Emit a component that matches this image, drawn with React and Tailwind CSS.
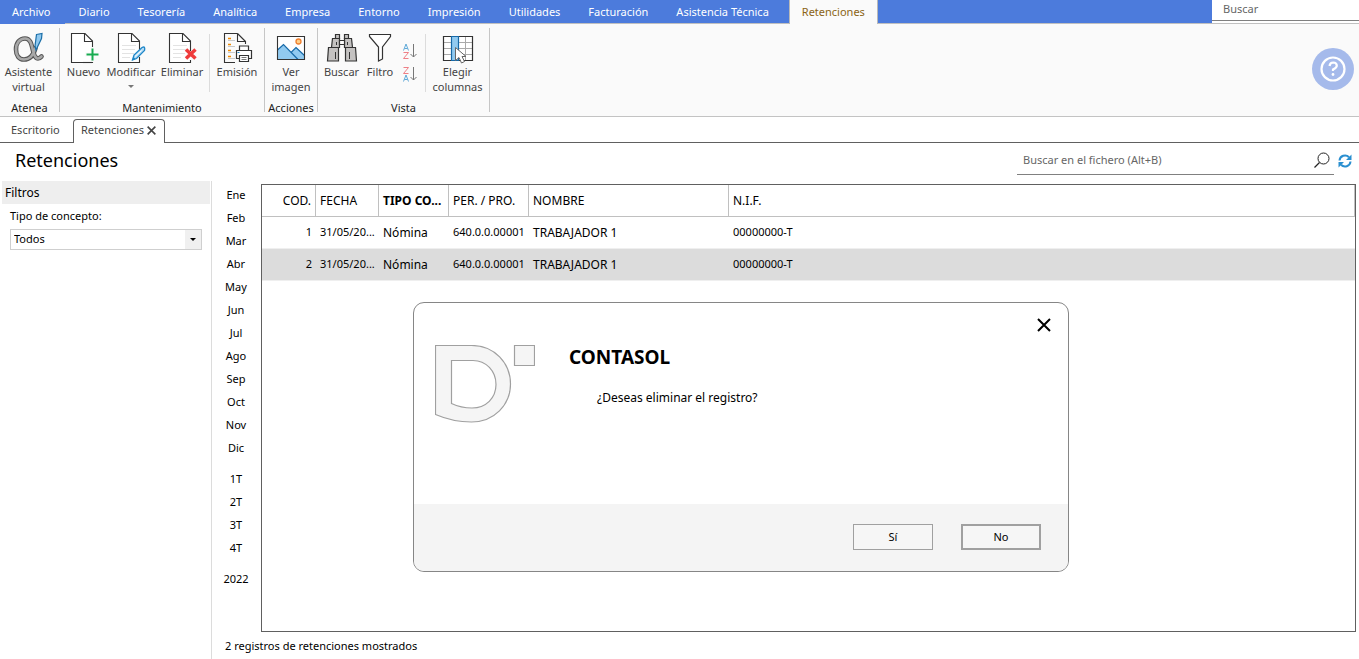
import { useState } from 'react'

const MENU = [
  'Diario',
  'Tesorería',
  'Analítica',
  'Empresa',
  'Entorno',
  'Impresión',
  'Utilidades',
  'Facturación',
  'Asistencia Técnica',
]

const MONTHS = ['Ene', 'Feb', 'Mar', 'Abr', 'May', 'Jun', 'Jul', 'Ago', 'Sep', 'Oct', 'Nov', 'Dic']
const QUARTERS = ['1T', '2T', '3T', '4T']

const ROWS = [
  { cod: 1, fecha: '31/05/20...', tipo: 'Nómina', cuenta: '640.0.0.00001', nombre: 'TRABAJADOR 1', nif: '00000000-T' },
  { cod: 2, fecha: '31/05/20...', tipo: 'Nómina', cuenta: '640.0.0.00001', nombre: 'TRABAJADOR 1', nif: '00000000-T' },
]

/* ---------- icons ---------- */

function Icon({ children }) {
  return (
    <svg width="32" height="32" viewBox="0 0 32 32" fill="none" aria-hidden="true">
      {children}
    </svg>
  )
}

// sheet with folded corner, shared by the record icons
function Sheet({ lines }) {
  return (
    <>
      <path d="M17 1.5H3.5v29h21V9z" fill="#fff" />
      {lines && <path d="M7 13.5h14M7 17.5h13M7 21.5h12M7 25.5h8" stroke="#e3e3e3" />}
      <path d="M15 30.5H3.5v-29H17L24.5 9v10M16.5 1.5V9.500h8" stroke="#333" strokeWidth="1.1" />
    </>
  )
}

function AlphaIcon() {
  return (
    <Icon>
      <g strokeLinecap="round">
        <path d="M22.500 16C20.500 23 16.500 27.500 11 27.500C6 27.500 3 23.500 3 17.500C3 11 6.500 6.500 12 6.500C18 6.500 18.500 13 20.500 20.500C22 26 24.500 28.500 28.500 24.500" stroke="#555" strokeWidth="4.600" />
        <path d="M22.500 16C20.500 23 16.500 27.500 11 27.500C6 27.500 3 23.500 3 17.500C3 11 6.500 6.500 12 6.500C18 6.500 18.500 13 20.500 20.500C22 26 24.500 28.500 28.500 24.500" stroke="#a8a8a8" strokeWidth="2.600" />
      </g>
      <path d="M23.500 2.500l5.500-1-.5 5-5.500 11.500-1-4z" fill="#8fc8ef" stroke="#1b6fa8" strokeWidth="1.200" />
    </Icon>
  )
}

function NewIcon() {
  return (
    <Icon>
      <Sheet />
      <path d="M15.500 30.500h9V28" stroke="#333" strokeWidth="1.1" />
      <path d="M17 22.500h14M24.500 15v15" stroke="#fafafa" strokeWidth="4" />
      <path d="M15 30.500h9.500" stroke="#333" strokeWidth="1.1" />
      <path d="M18.500 22.500h12M24.500 16.500v12" stroke="#18ab50" strokeWidth="2" />
    </Icon>
  )
}

function EditIcon() {
  return (
    <Icon>
      <Sheet lines />
      <path d="M15 30.500h9.500V25" stroke="#333" strokeWidth="1.1" />
      <path d="M17.500 28l1.500-5 8-7.500q2-1 2.500 0t0 3L21.500 26.500z" fill="#b5dcf5" stroke="#1e86c8" strokeWidth="1.300" />
      <path d="M20 24.500l6.500-6" stroke="#fff" />
      <path d="M17 28.500l3.500-1.500-2-2z" fill="#1e86c8" />
    </Icon>
  )
}

function DeleteIcon() {
  return (
    <Icon>
      <Sheet lines />
      <path d="M15 30.500h9.500V28" stroke="#333" strokeWidth="1.1" />
      <path d="M20 17.500l9.500 9M29.500 17.500l-9.500 9" stroke="#ef3b3b" strokeWidth="3.500" />
    </Icon>
  )
}

function PrintIcon() {
  return (
    <Icon>
      <path d="M16.500 1.500h-13v29H14M16.500 1.500l8 8M16.500 1.500v8h8V12" stroke="#333" strokeWidth="1.1" />
      <path d="M7 6.500h3M7 12.500h3M7 18.500h3M7 24.500h3" stroke="#f08a00" strokeWidth="1.500" />
      <path d="M7 8.500h7M7 14.500h7M7 20.500h7M7 26.500h7" stroke="#c9c9c9" />
      <g stroke="#333" strokeWidth="1.200" fill="#fff">
        <path d="M18.500 18.500v-4.500h9v4.500" />
        <path d="M15.500 18.500h15v8h-15z" />
        <path d="M18.500 23.500h9v6h-9z" />
      </g>
      <path d="M20.500 25.500h5M20.500 27.500h5" stroke="#777" />
      <path d="M16.500 20.500h2" stroke="#1e86c8" />
    </Icon>
  )
}

function ImageIcon() {
  return (
    <Icon>
      <path d="M2.500 4.500h27v23h-27z" fill="#fff" />
      <path d="M3 17.500L8 12.500l15 15H3z" fill="#91caf0" />
      <path d="M16.500 20.500l5-5 8 8v4h-6.500z" fill="#91caf0" />
      <path d="M2.500 18l6-5.500L23 27.500M16 20.500l5-5 8.500 8" stroke="#1669a8" strokeWidth="1.200" />
      <path d="M2.500 4.500h27v23h-27z" stroke="#333" strokeWidth="1.1" />
      <circle cx="23.500" cy="9.500" r="2.500" fill="#ffd18a" stroke="#f08030" strokeWidth="1.300" />
    </Icon>
  )
}

function BinocularsIcon() {
  return (
    <Icon>
      <g fill="#c4c2c1" stroke="#333" strokeWidth="1.200">
        <path d="M9.500 2.500h4v4h-4zM18.500 2.500h4v4h-4z" />
        <path d="M6.500 6.500h7v9h-8zM18.500 6.500h7l1 9h-8z" />
        <path d="M2.500 15.500h10v13.500h-11zM19.500 15.500h10l1 13.500h-11z" />
        <path d="M13.500 8.500h5v4h-5z" fill="#fff" />
      </g>
      <path d="M9.500 20v7M23.500 20v7M10.500 10v3M21.500 10v3" stroke="#333" />
    </Icon>
  )
}

function FilterIcon() {
  return (
    <Icon>
      <path d="M5.500 2.500h21v2l-8 10.500v12l-4 2v-14l-9-10.500z" fill="#fff" stroke="#333" strokeWidth="1.200" />
    </Icon>
  )
}

function ColumnsIcon() {
  return (
    <Icon>
      <path d="M1.500 4.500h29v24h-29z" fill="#fff" />
      <path d="M1.500 10.500h29M1.500 16.500h29M1.500 22.500h29M16.500 4v24M23.500 4v24" stroke="#aaa" />
      <path d="M16.500 28.500h14v-24h-29v24h8" stroke="#333" strokeWidth="1.200" />
      <path d="M9.500 4.500h7v24h-7z" fill="#91caf0" stroke="#1669a8" strokeWidth="1.200" />
      <path d="M13.500 15.500v13l3.500-3 2.500 5.500 3-1.500-2.500-5h4z" fill="#fff" stroke="#666" />
    </Icon>
  )
}

function SortIcon({ up }) {
  return (
    <svg width="16" height="17" viewBox="0 0 16 17" fill="none" aria-hidden="true">
      <g stroke={up ? '#5fa9d8' : '#ee7f86'}>
        {up ? <path d="M1.500 7.500L4 1l2.500 6.500M2.500 5.500h3" /> : <path d="M1.500 1.500h5l-5 6h5" />}
      </g>
      <g stroke={up ? '#ee7f86' : '#5fa9d8'}>
        {up ? <path d="M1.500 9.500h5l-5 6h5" /> : <path d="M1.500 15.500L4 9l2.500 6.500M2.500 13.500h3" />}
      </g>
      <path d="M11.500 1v13M8.500 11l3 3 3-3" stroke="#777" />
    </svg>
  )
}

function HelpIcon() {
  return (
    <svg width="26" height="26" viewBox="0 0 26 26" fill="none" aria-hidden="true">
      <circle cx="13" cy="13" r="11.500" stroke="#fff" strokeWidth="2.200" />
      <path d="M9.500 10q.5-3.500 3.700-3.500 3.600.2 3.600 3.300 0 2-3.800 3.700v1.500" stroke="#fff" strokeWidth="2.200" />
      <circle cx="13" cy="18.500" r="1.400" fill="#fff" />
    </svg>
  )
}

function SearchIcon() {
  return (
    <svg width="16" height="16" viewBox="0 0 16 16" fill="none" aria-hidden="true">
      <circle cx="9.500" cy="6.500" r="5.500" stroke="#222" />
      <path d="M5.500 10.500L.5 15.500" stroke="#222" strokeWidth="1.300" />
    </svg>
  )
}

function RefreshIcon() {
  return (
    <svg width="14" height="14" viewBox="0 0 14 14" fill="none" aria-hidden="true">
      <path d="M1.500 6.500a5.500 5.500 0 0 1 9.500-3.300M12.500 7.500a5.500 5.500 0 0 1-9.500 3.300" stroke="#2a8fd0" strokeWidth="2" />
      <path d="M13.500.5v5.500H8zM.5 13.500V8H6z" fill="#2a8fd0" />
    </svg>
  )
}

function CloseIcon({ size, width }) {
  return (
    <svg width={size} height={size} viewBox="0 0 14 14" aria-hidden="true">
      <path d="M1 1l12 12M13 1L1 13" stroke="currentColor" strokeWidth={width} />
    </svg>
  )
}

function Logo() {
  return (
    <svg width="100" height="78" viewBox="0 0 100 78" fill="#f5f5f5" stroke="#a0a0a0" strokeWidth="1.200" aria-hidden="true">
      <path
        fillRule="evenodd"
        d="M.5.5H36.500C59.500.5 75.500 18 75.500 39C75.500 60 59 77 36.500 77Q18 77 .5 69.500zM16.500 15.500V58.500Q26 63 37 63C51 63 61 53 61 39.500C61 26 51 15.500 38 15.500z"
      />
      <path d="M79.500.5h20v20H79.500z" />
    </svg>
  )
}

/* ---------- ribbon ---------- */

function RibbonButton({ icon, label, className, menu }) {
  return (
    <button className={`flex flex-col items-center text-[#444] leading-[15px] ${className}`}>
      {icon}
      <span>{label}</span>
      {menu && <span className="mt-1.5 border-x-[3px] border-t-[3px] border-x-transparent border-t-[#777]" />}
    </button>
  )
}

function RibbonGroup({ title, className, children }) {
  return (
    <section className={`flex flex-col justify-between border-r border-[#c6c6c6] ${className}`}>
      <div className="flex pt-1">{children}</div>
      <h2 className="text-center leading-2 text-[#222]">{title}</h2>
    </section>
  )
}

function Divider() {
  return <div className="mt-0.5 h-[58px] w-px bg-[#dcdcdc]" />
}

function Ribbon() {
  return (
    <div className="flex h-[93px] items-start justify-between border-b border-[#c3c3c3] bg-[#fafafa] pt-1">
      <div className="flex h-[84px]">
        <RibbonGroup title="Atenea" className="w-[60px]">
          <RibbonButton className="w-[57px]" icon={<AlphaIcon />} label="Asistente virtual" />
        </RibbonGroup>
        <RibbonGroup title="Mantenimiento" className="w-[205px]">
          <RibbonButton className="w-[47px]" icon={<NewIcon />} label="Nuevo" />
          <RibbonButton className="w-12" icon={<EditIcon />} label="Modificar" menu />
          <RibbonButton className="w-[54px]" icon={<DeleteIcon />} label="Eliminar" />
          <Divider />
          <RibbonButton className="w-[54px]" icon={<PrintIcon />} label="Emisión" />
        </RibbonGroup>
        <RibbonGroup title="Acciones" className="w-[53px]">
          <RibbonButton className="w-[52px]" icon={<ImageIcon />} label="Ver imagen" />
        </RibbonGroup>
        <RibbonGroup title="Vista" className="w-[172px]">
          <RibbonButton className="w-[47px]" icon={<BinocularsIcon />} label="Buscar" />
          <RibbonButton className="w-[30px]" icon={<FilterIcon />} label="Filtro" />
          <div className="flex w-[30px] flex-col items-center gap-1.5 pt-[11px]">
            <button aria-label="Orden ascendente"><SortIcon up /></button>
            <button aria-label="Orden descendente"><SortIcon /></button>
          </div>
          <Divider />
          <RibbonButton className="w-[63px]" icon={<ColumnsIcon />} label="Elegir columnas" />
        </RibbonGroup>
      </div>
      <button aria-label="Ayuda" className="mt-5 mr-[5px] flex size-[42px] items-center justify-center rounded-full bg-[#a5baeb]">
        <HelpIcon />
      </button>
    </div>
  )
}

/* ---------- dialog ---------- */

function ConfirmDialog({ onClose }) {
  return (
    <div
      role="dialog"
      aria-labelledby="dialog-title"
      className="absolute top-[302px] left-[413px] flex h-[270px] w-[656px] flex-col overflow-hidden rounded-[11px] border border-[#868686] bg-white"
    >
      <div className="flex flex-1 items-start pr-[17px]">
        <div className="mt-[42px] ml-[21px]"><Logo /></div>
        <div className="mt-[42px] ml-[34px] flex-1">
          <h2 id="dialog-title" className="text-[19px] leading-6 font-bold">CONTASOL</h2>
          <p className="mt-[21px] ml-7 text-xs leading-4">¿Deseas eliminar el registro?</p>
        </div>
        <button aria-label="Cerrar" onClick={onClose} className="mt-[15px] text-black">
          <CloseIcon size={14} width={2} />
        </button>
      </div>
      <div className="flex h-[67px] justify-end gap-7 bg-[#f4f4f4] pt-5 pr-[27px]">
        <button onClick={onClose} className="h-[26px] w-20 border border-[#a0a0a0] bg-[#f6f6f6]">Sí</button>
        <button onClick={onClose} className="h-[26px] w-20 border-2 border-[#a0a0a0] bg-[#f6f6f6]">No</button>
      </div>
    </div>
  )
}

function App() {
  const [open, setOpen] = useState(true)
  const [selected, setSelected] = useState(2)

  return (
    <div className="relative flex min-h-screen flex-col bg-white font-['Noto_Sans','Open_Sans',sans-serif] text-[11px] text-black">
      {/* Menu bar */}
      <header className="flex h-6 justify-between border-b border-[#c0c0c0] bg-[#4c7bdc]">
        <nav className="flex gap-1.5 text-white">
          <div className="flex">
            <a href="#archivo" className="-mb-px flex items-center bg-[#4c7bdc] pr-3.5 pl-3">Archivo</a>
            {MENU.map(item => (
              <a key={item} href="#menu" className="flex items-center px-3.5 pt-px">{item}</a>
            ))}
          </div>
          <a href="#retenciones" className="-mb-px flex items-center border-x border-[#b9b9b9] bg-[#fafafa] px-3 text-[#8a6414]">
            Retenciones
          </a>
        </nav>
        <div className="w-[147px] bg-white">
          <input
            aria-label="Buscar"
            placeholder="Buscar"
            className="h-[21px] w-full border-b border-[#808080] px-[11px] pb-1 outline-none placeholder:text-[#666]"
          />
        </div>
      </header>

      <Ribbon />

      {/* Open documents */}
      <div className="flex h-[26px] items-end text-[#444]">
        <a href="#escritorio" className="flex h-full w-[73px] items-center border-b border-[#606060] pt-0.5 pl-[11px]">Escritorio</a>
        <div className="flex h-6 w-[92px] items-center justify-between rounded-t-[4px] border border-b-0 border-[#606060] pr-2 pb-0.5 pl-[7px]">
          <a href="#retenciones">Retenciones</a>
          <button aria-label="Cerrar pestaña"><CloseIcon size={9} width={2.5} /></button>
        </div>
        <div className="h-full flex-1 border-b border-[#606060]" />
      </div>

      {/* Title and file search */}
      <div className="flex h-[38px] items-start justify-between pr-[7px] pl-[15px]">
        <h1 className="pt-1 text-[18px] leading-[26px]">Retenciones</h1>
        <div className="flex items-center gap-1 pt-[3px]">
          <div className="flex h-[29px] w-[317px] items-center border-b border-[#808080] pr-1">
            <input
              aria-label="Buscar en el fichero"
              placeholder="Buscar en el fichero (Alt+B)"
              className="flex-1 px-1.5 outline-none placeholder:text-[#666]"
            />
            <button aria-label="Buscar"><SearchIcon /></button>
          </div>
          <button aria-label="Actualizar"><RefreshIcon /></button>
        </div>
      </div>

      <div className="flex flex-1">
        {/* Filters */}
        <aside className="w-[212px] border-r border-[#dcdcdc] pl-0.5">
          <h2 className="mr-px flex h-[23px] items-center bg-[#eeeeee] pl-[3px] text-xs">Filtros</h2>
          <div className="px-2 pt-1">
            <label htmlFor="concepto" className="block leading-4">Tipo de concepto:</label>
            <div className="relative mt-[5px] h-[21px] w-[192px] border border-[#cfcfcf]">
              <select id="concepto" className="block h-full w-full appearance-none bg-white pl-[3px] outline-none">
                <option>Todos</option>
              </select>
              <span className="pointer-events-none absolute inset-y-0 right-0 flex w-4 items-center justify-center bg-[#f0f0f0]">
                <span className="border-x-[3px] border-t-[3px] border-x-transparent border-t-black" />
              </span>
            </div>
          </div>
        </aside>

        {/* Periods */}
        <nav className="flex w-12 flex-col items-center pt-0.5 leading-[23px]">
          {MONTHS.map(m => (
            <button key={m}>{m}</button>
          ))}
          <div className="mt-2 flex flex-col">
            {QUARTERS.map(q => (
              <button key={q}>{q}</button>
            ))}
          </div>
          <button className="mt-2">2022</button>
        </nav>

        {/* Records */}
        <main className="flex flex-1 flex-col pt-[3px] pr-[3px] pl-px">
          <div className="flex-1 border border-[#606060]">
            <table className="w-full table-fixed border-separate border-spacing-0 text-left">
              <colgroup>
                <col className="w-[54px]" />
                <col className="w-[63px]" />
                <col className="w-[70px]" />
                <col className="w-[80px]" />
                <col className="w-[200px]" />
                <col />
              </colgroup>
              <thead className="text-xs">
                <tr className="h-8 *:border-r *:border-b *:border-[#c0c0c0] *:px-1 *:font-normal *:whitespace-nowrap">
                  <th className="text-right">COD.</th>
                  <th>FECHA</th>
                  <th><b>TIPO CO...</b></th>
                  <th>PER. / PRO.</th>
                  <th>NOMBRE</th>
                  <th>N.I.F.</th>
                </tr>
              </thead>
              <tbody>
                {ROWS.map(row => (
                  <tr
                    key={row.cod}
                    onClick={() => setSelected(row.cod)}
                    className={`h-8 *:border-b *:border-[#efefef] *:px-1 *:whitespace-nowrap ${selected === row.cod ? 'bg-[#dcdcdc]' : ''}`}
                  >
                    <td className="text-right">{row.cod}</td>
                    <td>{row.fecha}</td>
                    <td className="text-xs">{row.tipo}</td>
                    <td>{row.cuenta}</td>
                    <td className="text-xs">{row.nombre}</td>
                    <td>{row.nif}</td>
                  </tr>
                ))}
              </tbody>
            </table>
          </div>
          <p className="-ml-9 h-[27px] leading-[27px]">2 registros de retenciones mostrados</p>
        </main>
      </div>

      {open && <ConfirmDialog onClose={() => setOpen(false)} />}
    </div>
  )
}

export default App
